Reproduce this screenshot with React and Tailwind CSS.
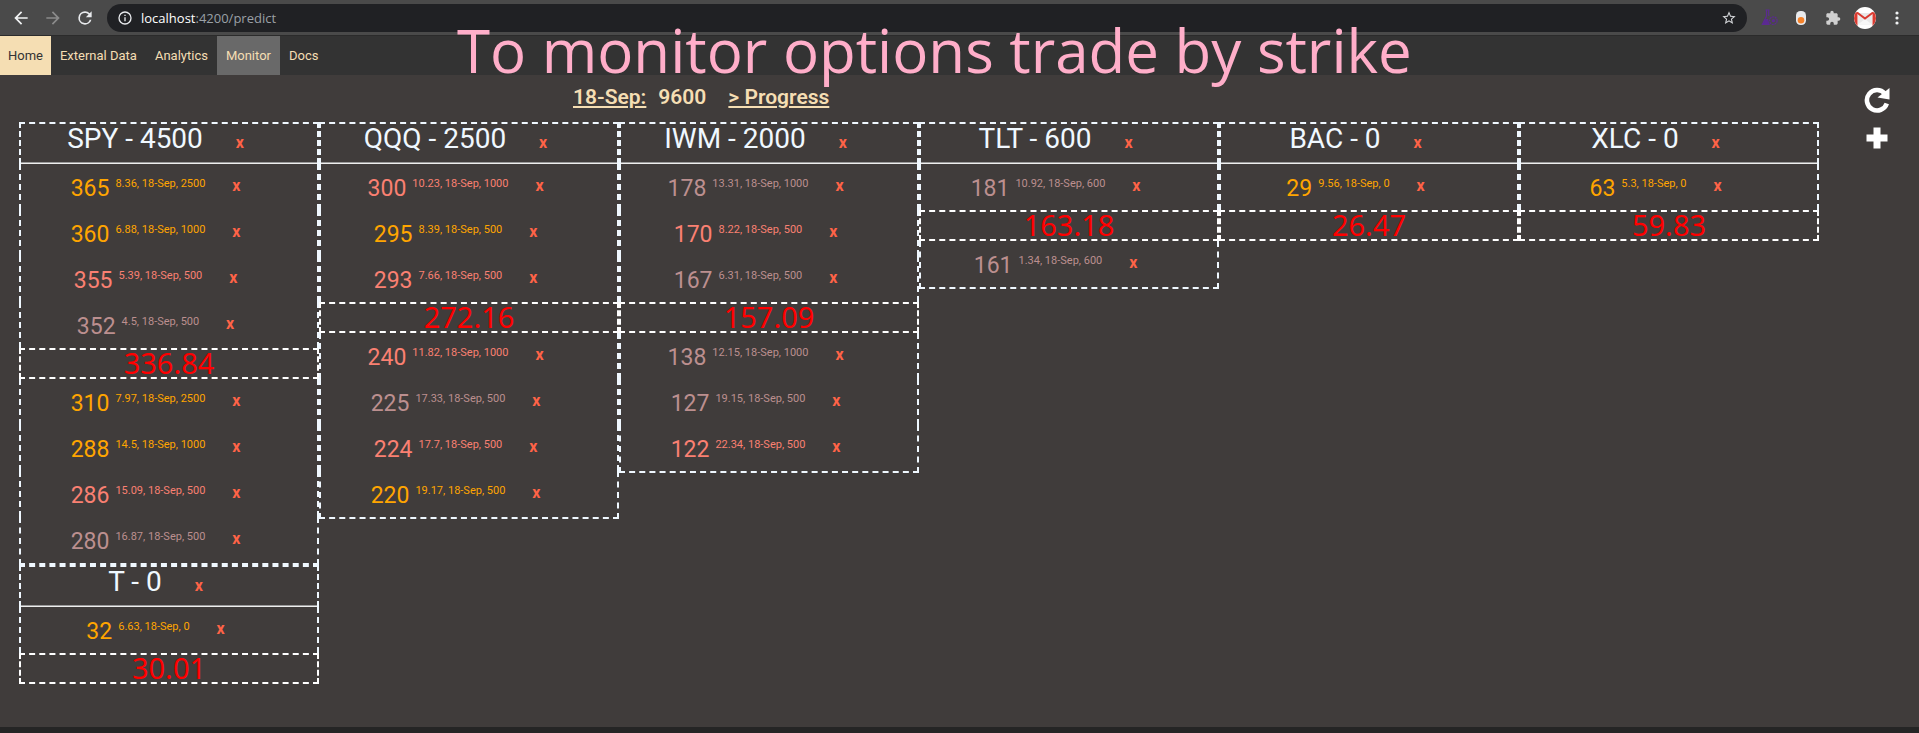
const DATE = "18-Sep";

const tones = {
  hot: "text-[#ffa500]",
  warm: "text-[#fa8072]",
  cool: "text-[#bc8f8f]",
};

const tickers = [
  {
    name: "SPY", total: 4500, price: "336.84",
    above: [
      [365, "8.36", 2500, "hot"],
      [360, "6.88", 1000, "hot"],
      [355, "5.39", 500, "warm"],
      [352, "4.5", 500, "cool"],
    ],
    below: [
      [310, "7.97", 2500, "hot"],
      [288, "14.5", 1000, "hot"],
      [286, "15.09", 500, "warm"],
      [280, "16.87", 500, "cool"],
    ],
  },
  {
    name: "QQQ", total: 2500, price: "272.16",
    above: [
      [300, "10.23", 1000, "warm"],
      [295, "8.39", 500, "hot"],
      [293, "7.66", 500, "warm"],
    ],
    below: [
      [240, "11.82", 1000, "warm"],
      [225, "17.33", 500, "cool"],
      [224, "17.7", 500, "warm"],
      [220, "19.17", 500, "hot"],
    ],
  },
  {
    name: "IWM", total: 2000, price: "157.09",
    above: [
      [178, "13.31", 1000, "cool"],
      [170, "8.22", 500, "warm"],
      [167, "6.31", 500, "cool"],
    ],
    below: [
      [138, "12.15", 1000, "cool"],
      [127, "19.15", 500, "cool"],
      [122, "22.34", 500, "warm"],
    ],
  },
  {
    name: "TLT", total: 600, price: "163.18",
    above: [[181, "10.92", 600, "cool"]],
    below: [[161, "1.34", 600, "cool"]],
  },
  { name: "BAC", total: 0, price: "26.47", above: [[29, "9.56", 0, "hot"]], below: [] },
  { name: "XLC", total: 0, price: "59.83", above: [[63, "5.3", 0, "hot"]], below: [] },
  { name: "T", total: 0, price: "30.01", above: [[32, "6.63", 0, "hot"]], below: [] },
];

const navItems = [
  { label: "Home", style: "px-2 bg-[#f5deb3] text-[#333333]" },
  { label: "External Data", style: "px-[9px] text-[#f5deb3]" },
  { label: "Analytics", style: "px-[9px] text-[#f5deb3]" },
  { label: "Monitor", style: "px-[9px] bg-[#696969] text-[#f5deb3]" },
  { label: "Docs", style: "px-[9px] text-[#f5deb3]" },
];

function RemoveButton({ label }) {
  return (
    <button type="button" aria-label={label} className="w-[62px] text-center text-base leading-5 font-bold text-[#ff6347]">
      x
    </button>
  );
}

function StrikeRow({ row, last }) {
  const [strike, cost, size, tone] = row;
  return (
    <li
      className={`flex items-start justify-center border-x-2 border-dashed border-[#f0f8ff] pt-3 ${last ? "h-12 border-b-2" : "h-[46px]"}`}
    >
      <span className={`flex items-start gap-1.5 ${tones[tone]}`}>
        <span className="text-[23px] leading-[26px]">{strike}</span>
        <span className="text-[11px] leading-4">
          {cost}, {DATE}, {size}
        </span>
      </span>
      <RemoveButton label={`Remove ${strike}`} />
    </li>
  );
}

function Ticker({ ticker }) {
  const { name, total, price, above, below } = ticker;
  return (
    <section>
      <header className="flex h-[42px] flex-col justify-between border-x-2 border-t-2 border-dashed border-[#f0f8ff]">
        <div className="flex items-baseline justify-center gap-1.5">
          <h2 className="text-[28px] leading-[30px] text-[#f0f8ff]">
            {name} - {total}
          </h2>
          <RemoveButton label={`Remove ${name}`} />
        </div>
        <hr className="border-t border-b border-solid border-t-[#9a9a9a] border-b-[#eeeeee]" />
      </header>
      <ul>
        {above.map((row) => (
          <StrikeRow key={row[0]} row={row} />
        ))}
      </ul>
      <p className="h-[31px] border-2 border-dashed border-white text-center font-['Noto_Sans',sans-serif] text-[29px] leading-[26px] text-[#ff0000]">
        {price}
      </p>
      <ul>
        {below.map((row, i) => (
          <StrikeRow key={row[0]} row={row} last={i === below.length - 1} />
        ))}
      </ul>
    </section>
  );
}

function BrowserBar() {
  return (
    <header className="flex h-9 items-center border-b border-[#2b2b2b] bg-[#4a4a4a] pl-[11px] pr-2.5">
      <div className="flex w-24 shrink-0 items-center gap-3">
        <button type="button" aria-label="Back" className="text-[#f1f3f4]">
          <svg viewBox="0 0 24 24" className="size-5" fill="currentColor"><path d="M20 11H7.83l5.59-5.59L12 4l-8 8 8 8 1.41-1.41L7.83 13H20v-2z" /></svg>
        </button>
        <button type="button" aria-label="Forward" className="text-[#8b8b8b]">
          <svg viewBox="0 0 24 24" className="size-5" fill="currentColor"><path d="M12 4l-1.41 1.41L16.17 11H4v2h12.17l-5.58 5.59L12 20l8-8z" /></svg>
        </button>
        <button type="button" aria-label="Reload" className="text-[#e8eaed]">
          <svg viewBox="0 0 24 24" className="size-5" fill="currentColor"><path d="M17.65 6.35A7.96 7.96 0 0 0 12 4a8 8 0 1 0 7.73 10h-2.08A6 6 0 1 1 12 6c1.66 0 3.14.69 4.22 1.78L13 11h7V4l-2.35 2.35z" /></svg>
        </button>
      </div>
      <div className="flex h-7 flex-1 items-center rounded-full bg-[#202124] pr-2.5 pl-2.5">
        <svg viewBox="0 0 24 24" className="size-4 shrink-0" fill="#e8eaed"><path d="M11 7h2v2h-2zm0 4h2v6h-2zm1-9a10 10 0 1 0 0 20 10 10 0 0 0 0-20zm0 18a8 8 0 1 1 0-16 8 8 0 0 1 0 16z" /></svg>
        <p className="ml-2 flex-1 font-['Open_Sans',sans-serif] text-[13px] leading-5 text-[#9aa0a6]">
          <span className="text-white">localhost</span>:4200/predict
        </p>
        <button type="button" aria-label="Bookmark" className="text-[#d5d7da]">
          <svg viewBox="0 0 24 24" className="size-4" fill="currentColor"><path d="M22 9.24l-7.19-.62L12 2 9.19 8.63 2 9.24l5.46 4.73L5.82 21 12 17.27 18.18 21l-1.63-7.03L22 9.24zM12 15.4l-3.76 2.27 1-4.28-3.32-2.88 4.38-.38L12 6.1l1.71 4.04 4.38.38-3.32 2.88 1 4.28L12 15.4z" /></svg>
        </button>
      </div>
      <div className="ml-2.5 flex items-center gap-2">
        <button type="button" aria-label="Lab extension" className="flex w-6 justify-center">
          <svg viewBox="0 0 17 17" className="size-[17px]" fill="none" stroke="#5b2a91" strokeWidth="1.2">
            <path d="M4.500 1h4M5.500 1v6L1.500 15.500h6M7.700 1v6" />
            <path d="M4 10.500l-2.500 5h6.500L6.500 10.500z" fill="#5b2a91" />
            <circle cx="12.300" cy="11.700" r="3.800" strokeDasharray="2 .7" />
            <circle cx="12.300" cy="11.700" r="1" fill="#5b2a91" />
          </svg>
        </button>
        <button type="button" aria-label="Toggle extension" className="flex w-6 justify-center">
          <svg viewBox="0 0 10 14" className="h-3.5 w-2.5">
            <rect width="10" height="14" rx="4.500" fill="#e8eaed" />
            <circle cx="5" cy="9.300" r="3.300" fill="#f5822a" />
          </svg>
        </button>
        <button type="button" aria-label="Extensions" className="flex w-6 justify-center">
          <svg viewBox="0 0 24 24" className="size-4" fill="#d0d0d0"><path d="M20.500 11H19V7c0-1.100-.9-2-2-2h-4V3.500a2.500 2.500 0 0 0-5 0V5H4c-1.100 0-2 .9-2 2v3.800h1.500a2.700 2.700 0 0 1 0 5.400H2V20c0 1.100.9 2 2 2h3.800v-1.500a2.700 2.700 0 0 1 5.400 0V22H17c1.100 0 2-.9 2-2v-4h1.500a2.500 2.500 0 0 0 0-5z" /></svg>
        </button>
        <button type="button" aria-label="Profile" className="flex w-6 justify-center">
          <svg viewBox="0 0 22 22" className="size-[22px]">
            <circle cx="11" cy="11" r="11" fill="#ffffff" />
            <path d="M4 6h14v11.500H4z" fill="#e9e9e9" />
            <path d="M4 17.500l7-5.500 7 5.500z" fill="#f8f8f8" />
            <path d="M3 5.500L11 11.500l8-6" fill="none" stroke="#d93a30" strokeWidth="2" />
            <path d="M1.600 5.400L3.500 5v14A11 11 0 0 1 1.600 5.400zM20.400 5.400L18.500 5v14a11 11 0 0 0 1.900-13.600z" fill="#d93a30" />
          </svg>
        </button>
        <button type="button" aria-label="Menu" className="flex w-6 justify-center">
          <svg viewBox="0 0 4 14" className="h-3.5 w-1" fill="#f1f3f4">
            <circle cx="2" cy="2" r="1.600" /><circle cx="2" cy="7" r="1.600" /><circle cx="2" cy="12" r="1.600" />
          </svg>
        </button>
      </div>
    </header>
  );
}

export default function App() {
  return (
    <div className="flex min-h-screen flex-col bg-[#403c3b] font-[Roboto,sans-serif]">
      <BrowserBar />
      <p className="pointer-events-none absolute top-4 left-[457px] font-['Open_Sans',sans-serif] text-[60px] leading-[68px] whitespace-nowrap text-[#ffaec9]">
        To monitor options trade by strike
      </p>
      <nav className="flex h-[39px] bg-[#333333]">
        {navItems.map((n) => (
          <a key={n.label} href="#" className={`flex items-center text-[13px] leading-5 ${n.style}`}>{n.label}</a>
        ))}
      </nav>
      <main className="flex flex-1 items-start pl-[19px]">
        <div className="min-w-0 flex-1">
          <div className="flex h-[47px] gap-3 pt-2 pl-[554px] text-[21px] leading-7 font-semibold text-[#f5deb3]">
            <a href="#" className="underline decoration-2 underline-offset-2">18-Sep:</a>
            <span>9600</span>
            <a href="#" className="ml-2.5 underline decoration-2 underline-offset-2">&gt; Progress</a>
          </div>
          <div className="grid grid-cols-6 items-start">
            {tickers.map((t) => <Ticker key={t.name} ticker={t} />)}
          </div>
        </div>
        <div className="flex w-[100px] flex-col items-center gap-3.5 pt-3 pl-4 text-white">
          <button type="button" aria-label="Refresh">
            <svg viewBox="0 0 26 26" className="size-[26px]">
              <path d="M20.800 6.500A10.200 10.200 0 1 0 22.800 16.500" fill="none" stroke="currentColor" strokeWidth="4.600" />
              <path d="M25.500 1v11.500L13.500 10.500z" fill="currentColor" />
            </svg>
          </button>
          <button type="button" aria-label="Add ticker">
            <svg viewBox="0 0 22 22" className="size-[22px]" fill="currentColor">
              <path d="M7.500 0.500h7v7h7v7h-7v7h-7v-7h-7v-7h7z" />
            </svg>
          </button>
        </div>
      </main>
      <footer className="h-1.5 bg-[#252525]" />
    </div>
  );
}
